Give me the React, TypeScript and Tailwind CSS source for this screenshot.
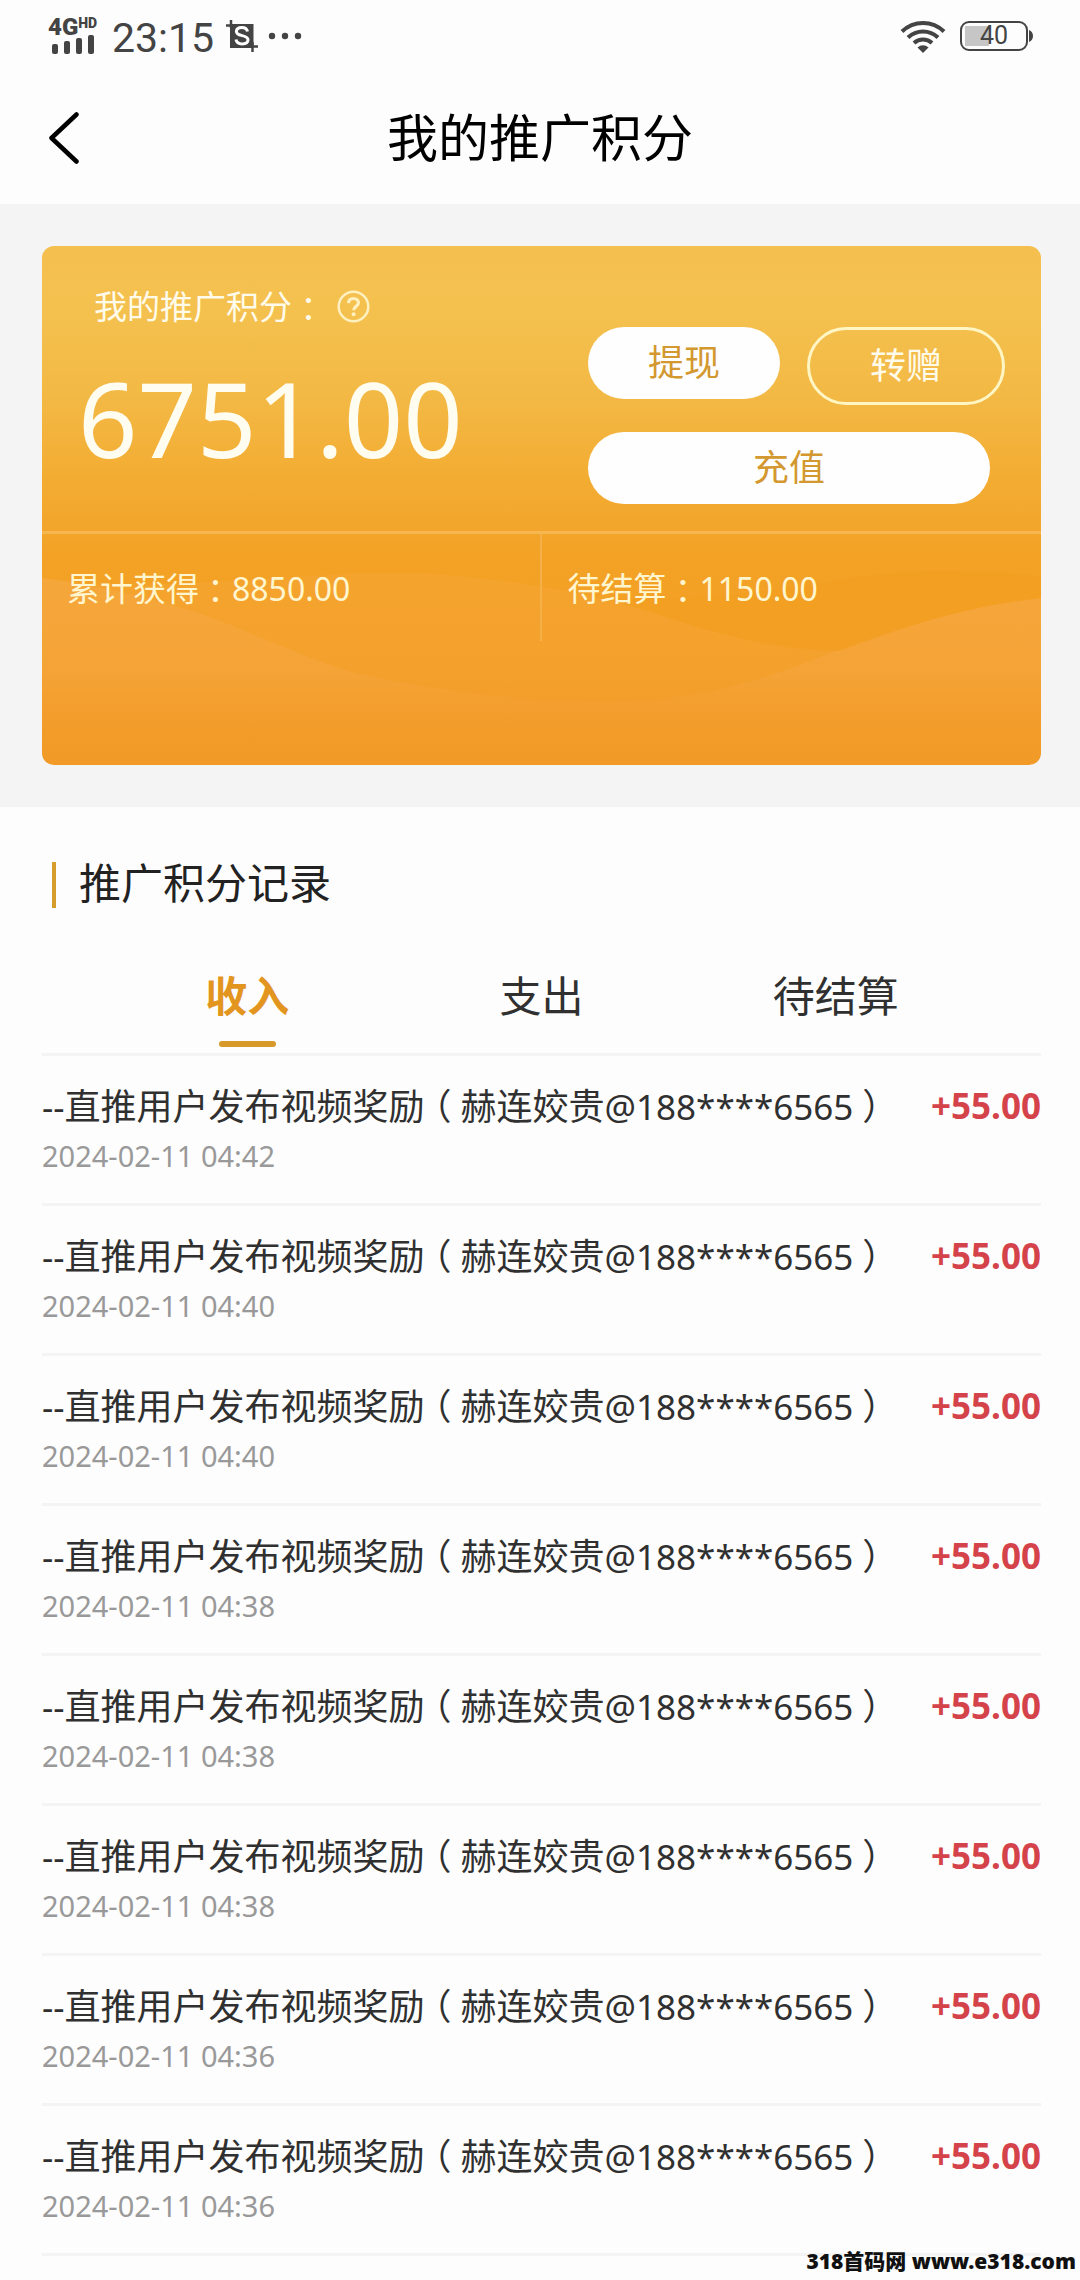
import { useState } from 'react';

const TABS = ['收入', '支出', '待结算'];

const RECORDS = [
  '2024-02-11 04:42',
  '2024-02-11 04:40',
  '2024-02-11 04:40',
  '2024-02-11 04:38',
  '2024-02-11 04:38',
  '2024-02-11 04:38',
  '2024-02-11 04:36',
  '2024-02-11 04:36',
].map((time) => ({
  time,
  title: '直推用户发布视频奖励',
  name: '赫连姣贵',
  account: '@188****6565',
  amount: '+55.00',
}));

/** Full-width punctuation, centred in its em box. */
function Punct({ children }: { children: string }) {
  return (
    <span className="inline-block w-[1em] text-center font-['Noto_Sans_CJK_SC',sans-serif] [font-feature-settings:'halt']">
      {children}
    </span>
  );
}

function StatusBar() {
  return (
    <div className="flex h-[72px] items-center justify-between pr-[47px] pl-12 font-[Roboto,sans-serif] text-[#444]">
      <div className="flex items-center">
        <div className="flex w-16 flex-col">
          <div className="flex h-[17px] items-start font-black">
            <span className="text-[24px] leading-[18px]">4G</span>
            <span className="text-[14px] leading-[10px]">HD</span>
          </div>
          <svg width="50" height="19" viewBox="0 0 50 19" fill="currentColor" aria-hidden="true">
            <rect x="4" y="9" width="6" height="10" rx="2" />
            <rect x="16" y="6" width="6" height="13" rx="2" />
            <rect x="28" y="3" width="6" height="16" rx="2" />
            <rect x="40" y="0" width="6" height="19" rx="2" />
          </svg>
        </div>
        <span className="pt-1 text-[41px] leading-[48px]">23:15</span>
        <svg className="ml-3" width="32" height="32" viewBox="0 0 32 32" aria-hidden="true">
          <path d="M4 4h23.500v24H4z" fill="currentColor" />
          <path d="M0 5.500h8M5 0v8M24 26.500h8M26.500 22v10" stroke="currentColor" strokeWidth="2.500" />
          <path
            d="M21.500 11.500c-.6-2.800-2.700-4-5.600-4-3.200 0-5.500 1.500-5.500 4 0 5.700 11.600 2.500 11.600 8.300 0 2.700-2.500 4.200-5.900 4.200-3.300 0-5.600-1.400-6.100-4.400"
            fill="none"
            stroke="#fff"
            strokeWidth="3"
          />
        </svg>
        <svg className="ml-2.5" width="34" height="8" viewBox="0 0 34 8" fill="currentColor" aria-hidden="true">
          <circle cx="4" cy="4" r="3.200" />
          <circle cx="17" cy="4" r="3.200" />
          <circle cx="30" cy="4" r="3.200" />
        </svg>
      </div>
      <div className="flex items-center gap-[14px]">
        <svg width="46" height="34" viewBox="0 0 46 34" fill="none" stroke="currentColor" strokeWidth="4" aria-hidden="true">
          <path d="M2 12.500a30 30 0 0 1 42 0" />
          <path d="M8 18.500a21.500 21.500 0 0 1 30 0" />
          <path d="M14 24a13 13 0 0 1 18 0" />
          <path d="M17.500 28.500a8 8 0 0 1 11 0L23 34z" fill="currentColor" stroke="none" />
        </svg>
        <div className="flex items-center gap-px">
          <div className="flex h-[30px] w-[68px] items-center rounded-[9px] border-2 border-[#444] bg-[linear-gradient(#c6c6c6,#c6c6c6)] bg-[length:24px_20px] bg-[position:3px_3px] bg-no-repeat">
            <span className="w-full text-center text-[25px] leading-[26px]">40</span>
          </div>
          <svg width="4" height="12" viewBox="0 0 4 12" fill="currentColor" aria-hidden="true">
            <path d="M0 0c2.500 1 4 3 4 6s-1.500 5-4 6z" />
          </svg>
        </div>
      </div>
    </div>
  );
}

function NavBar() {
  return (
    <header className="grid h-[132px] grid-cols-[1fr_auto_1fr] items-center px-12 pb-0.5">
      <button type="button" aria-label="返回" className="justify-self-start">
        <svg width="32" height="54" viewBox="0 0 32 54" fill="none" stroke="#000" strokeWidth="4.500" strokeLinecap="round" strokeLinejoin="round" aria-hidden="true">
          <path d="M28.500 4.500 3.500 28l25 23.500" />
        </svg>
      </button>
      <h1 className="text-[51px] leading-[64px] text-black">我的推广积分</h1>
    </header>
  );
}

function BalanceCard() {
  return (
    <section className="bg-[#f4f4f4] pt-[42px] pr-[39px] pb-[42px] pl-[42px]">
      <div className="relative isolate h-[519px] overflow-hidden rounded-[12px] bg-[linear-gradient(#f5bf4f_0%,#f4c14f_12%,#f3b844_30%,#f3ac32_45%,#f2a62b_54%,#f3a225_60%,#f4a027_75%,#f19a28_100%)] text-[#fffbea]">
        <svg className="absolute inset-0 -z-10 h-full w-full" viewBox="0 0 998 519" preserveAspectRatio="none" aria-hidden="true">
          <defs>
            <linearGradient id="wave" gradientUnits="userSpaceOnUse" x1="0" y1="330" x2="0" y2="519">
              <stop offset="0" stopColor="#f7ab4a" stopOpacity=".6" />
              <stop offset=".5" stopColor="#f6a848" stopOpacity=".5" />
              <stop offset="1" stopColor="#f29a28" stopOpacity="0" />
            </linearGradient>
          </defs>
          <path d="M0 332C120 350 240 325 371 327C470 332 560 350 605 365C670 385 720 405 798 405C850 385 920 360 998 353V519H0z" fill="url(#wave)" opacity=".35" />
          <path d="M0 332C60 340 110 352 165 370C230 395 270 415 316 428C400 446 510 460 600 455C680 448 730 430 785 408C850 385 920 360 998 352V519H0z" fill="url(#wave)" opacity=".75" />
          <path d="M560 352C640 356 740 345 820 330C880 322 940 324 998 330V352C920 360 850 385 798 405C720 400 660 385 605 365z" fill="#ef9d18" opacity=".25" />
        </svg>
        <div className="flex h-[288px] justify-between border-b-[3px] border-[#f6b650] pr-9 pl-9">
          <div className="pt-9">
            <div className="flex items-center gap-3 pl-4 text-[33px] leading-[46px]">
              <span>
                我的推广积分<Punct>：</Punct>
              </span>
              <button type="button" aria-label="积分说明">
                <svg width="33" height="33" viewBox="0 0 33 33" fill="none" stroke="#fff0bf" aria-hidden="true">
                  <circle cx="16.500" cy="16.500" r="14.800" strokeWidth="2.500" />
                  <path d="M11.500 13.200c.2-2.900 2.200-4.700 5-4.700s5 1.700 5 4.300c0 3.600-4.800 3.600-4.800 7.400" strokeWidth="3.200" />
                  <circle cx="16.600" cy="24.300" r="2" fill="#fff0bf" stroke="none" />
                </svg>
              </button>
            </div>
            <div className="pt-[18px] text-[104px] leading-[140px] text-[#fffdf0]">6751.00</div>
          </div>
          <div className="flex flex-col gap-[27px] pt-[81px] text-[36px] leading-[48px]">
            <div className="flex items-start gap-[27px]">
              <button type="button" className="h-[72px] w-[192px] rounded-full bg-[#fefefe] text-[#d3982f]">提现</button>
              <button type="button" className="h-[78px] w-[198px] rounded-full border-[3px] border-[#fff6c4]">转赠</button>
            </div>
            <button type="button" className="mr-[15px] h-[72px] rounded-full bg-[#fefefe] text-[#d3982f]">充值</button>
          </div>
        </div>
        <div className="grid grid-cols-2 text-[33px] leading-[46px] text-[#fff6cf]">
          <div className="h-[107px] border-r-2 border-[#f6b048] pt-[30px] pl-[25px]">
            累计获得<Punct>：</Punct>
            <span className="text-[32px]">8850.00</span>
          </div>
          <div className="pt-[30px] pl-[26px]">
            待结算<Punct>：</Punct>
            <span className="text-[32px]">1150.00</span>
          </div>
        </div>
      </div>
    </section>
  );
}

export default function App() {
  const [active, setActive] = useState(0);

  return (
    <div className="relative min-h-screen bg-[#fdfdfd] font-['Noto_Sans','Noto_Sans_CJK_SC',sans-serif] text-[#303030]">
      <StatusBar />
      <NavBar />
      <BalanceCard />
      <main className="pr-[39px] pl-[42px]">
        <h2 className="flex items-start gap-[23px] pt-[50px] pl-[10px] text-[42px] leading-[52px] text-[#222]">
          <span className="mt-[5px] h-[46px] w-1 bg-[#d69c2c]" />
          推广积分记录
        </h2>
        <div role="tablist" className="mt-[60px] grid grid-cols-3 border-b-[3px] border-[#f4f4f4] px-[58px]">
          {TABS.map((tab, i) => (
            <button
              key={tab}
              type="button"
              role="tab"
              aria-selected={active === i}
              onClick={() => setActive(i)}
              className={
                active === i
                  ? 'flex h-[84px] flex-col items-center gap-[18px] text-[42px] leading-[54px] font-bold text-[#e2951f]'
                  : 'flex h-[84px] flex-col items-center gap-[18px] text-[42px] leading-[54px]'
              }
            >
              {tab}
              {active === i && <span className="h-[6px] w-[57px] rounded-full bg-[#d89a2b]" />}
            </button>
          ))}
        </div>
        <ul>
          {RECORDS.map((r, i) => (
            <li key={i} className="flex h-[150px] items-start justify-between border-b-[3px] border-[#f4f4f4] pt-[23px]">
              <div>
                <p className="text-[36px] leading-[50px] whitespace-nowrap">
                  <span className="text-[35px]">--</span>
                  {r.title}
                  <Punct>（</Punct>
                  {r.name}
                  <span className="text-[35px]">{r.account}</span>
                  <Punct>）</Punct>
                </p>
                <time className="block text-[29px] leading-[48px] text-[#999]">{r.time}</time>
              </div>
              <span className="text-[35px] leading-[54px] font-bold text-[#d5434a]">{r.amount}</span>
            </li>
          ))}
        </ul>
      </main>
      <div className="absolute right-1 bottom-1 text-[21px] leading-[30px] font-black text-[#111]">318首码网 www.e318.com</div>
    </div>
  );
}
